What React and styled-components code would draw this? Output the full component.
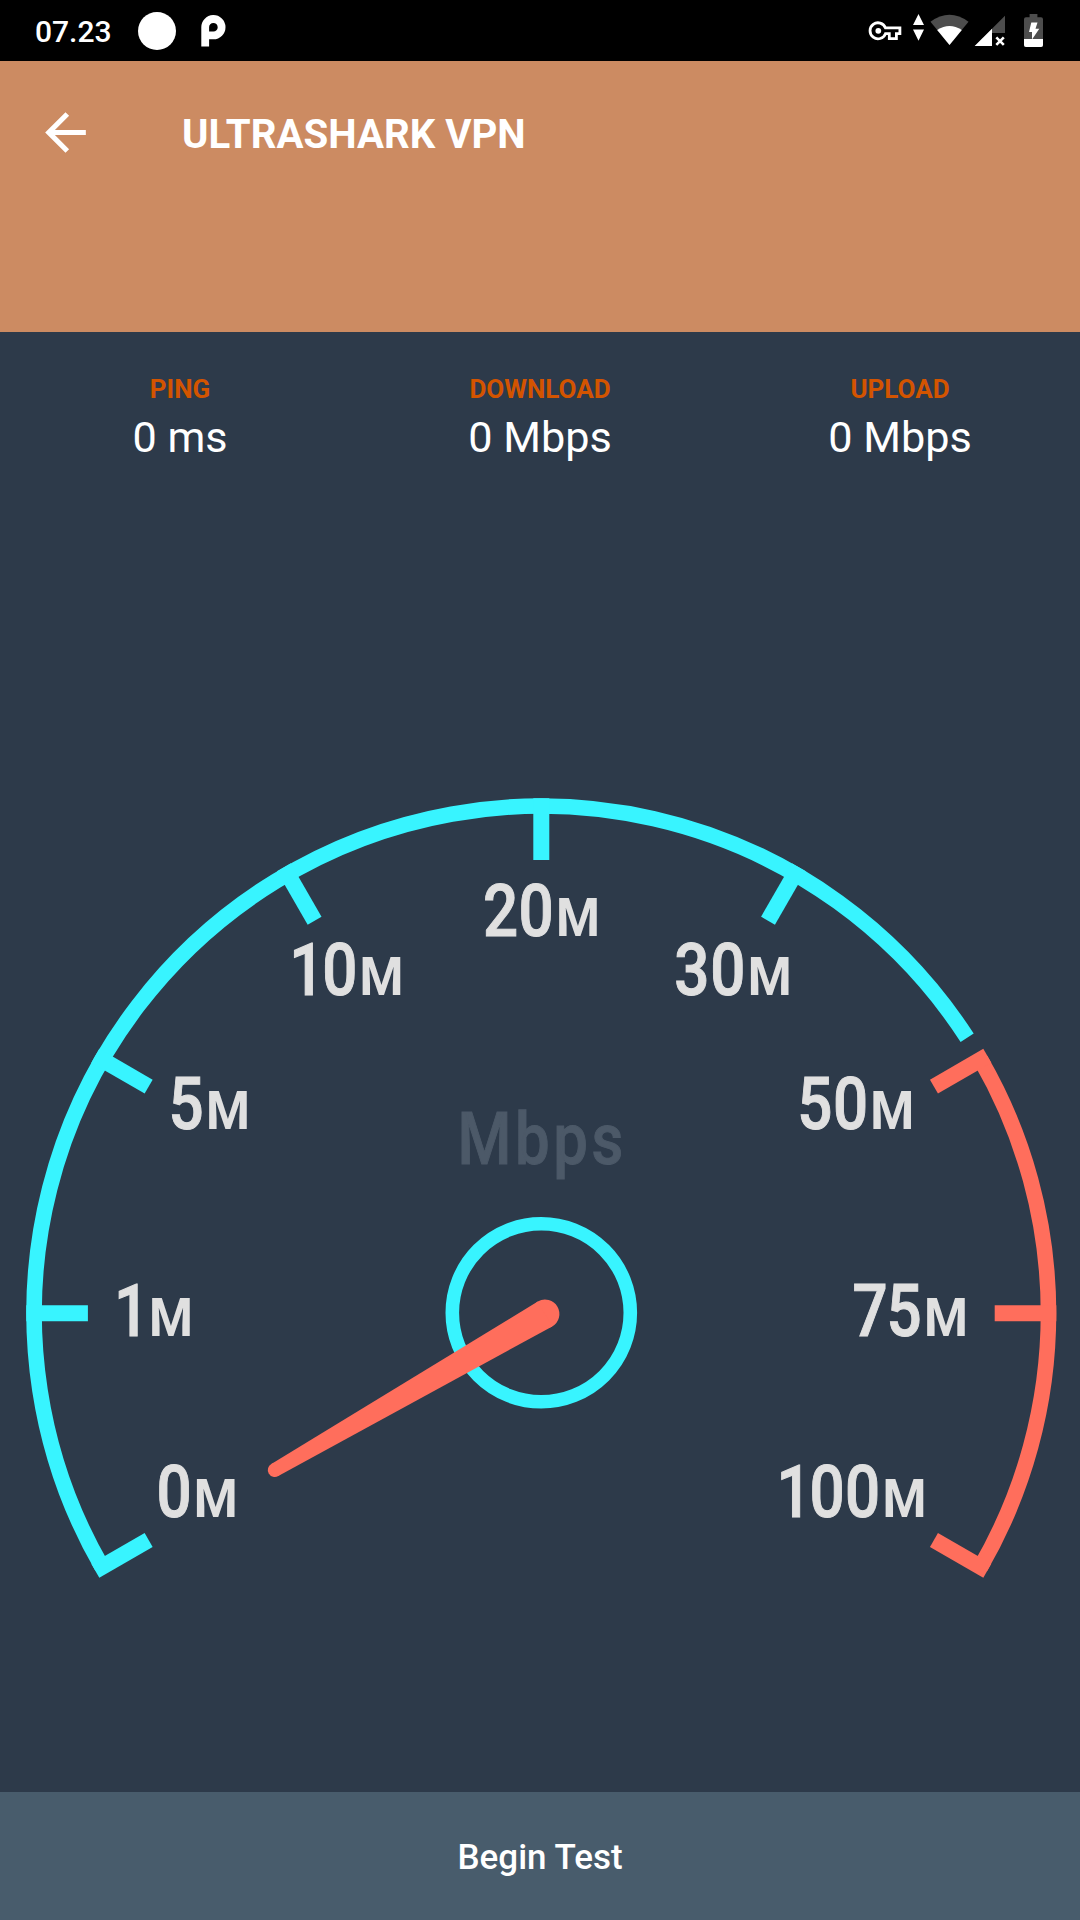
import styled, { createGlobalStyle } from 'styled-components';
import { MdArrowBack } from 'react-icons/md';

const CYAN = '#38f4ff';
const CORAL = '#ff6e5c';

// dial geometry, in the gauge's own coordinates
const CX = 541.3;
const CY = 521.3;
const OUTER = 515;
const RING = 507.2;
const TICK_END = 453.4;

// digits are narrowed and set on a fixed pitch
const NARROW = 0.86;
const PITCH = 35.6;
const NUDGE = { 1: 2.6, 3: -0.4, 7: 1.5 };

const stats = [
  { name: 'PING', value: '0 ms' },
  { name: 'DOWNLOAD', value: '0 Mbps' },
  { name: 'UPLOAD', value: '0 Mbps' },
];

// angle is measured clockwise from three o'clock, x is where the unit starts
const marks = [
  { digits: '0', angle: 150, x: 193.8, y: 724.9, color: CYAN },
  { digits: '1', angle: 180, x: 148.9, y: 543.5, color: CYAN },
  { digits: '5', angle: 210, x: 206, y: 337.2, color: CYAN },
  { digits: '10', angle: 240, x: 359.6, y: 202.9, color: CYAN },
  { digits: '20', angle: 270, x: 555.9, y: 143.5, color: CYAN },
  { digits: '30', angle: 300, x: 747.7, y: 202.9, color: CYAN },
  { digits: '50', angle: 330, x: 870.3, y: 337.2, color: CORAL },
  { digits: '75', angle: 0, x: 924, y: 543.5, color: CORAL },
  { digits: '100', angle: 30, x: 882.4, y: 724.9, color: CORAL },
];

const polar = (radius, angle) => {
  const rad = (angle * Math.PI) / 180;
  return [CX + radius * Math.cos(rad), CY + radius * Math.sin(rad)];
};

const arc = (radius, from, to) => {
  const [x1, y1] = polar(radius, from);
  const [x2, y2] = polar(radius, to);
  const large = to - from > 180 ? 1 : 0;
  return `M${x1} ${y1}A${radius} ${radius} 0 ${large} 1 ${x2} ${y2}`;
};

const digitOffsets = (digits) =>
  [...digits]
    .map((digit, i) => (-1.8 - (digits.length - i) * PITCH + (NUDGE[digit] || 0)) / NARROW)
    .join(' ');

const Tick = ({ angle, color }) => {
  const [x1, y1] = polar(TICK_END, angle);
  const [x2, y2] = polar(OUTER, angle);
  return <line x1={x1} y1={y1} x2={x2} y2={y2} stroke={color} strokeWidth="16" />;
};

const Mark = ({ digits, x, y }) => (
  <>
    <DialDigits x={digitOffsets(digits)} transform={`translate(${x} ${y}) scale(${NARROW} 1)`}>
      {digits}
    </DialDigits>
    <DialUnit transform={`translate(${x} ${y}) scale(0.93 1)`}>M</DialUnit>
  </>
);

const Gauge = () => (
  <Dial viewBox="0 0 1080 1000">
    <path d={arc(RING, 150, 327.1)} fill="none" stroke={CYAN} strokeWidth="15.6" />
    <path d={arc(RING, 330, 390)} fill="none" stroke={CORAL} strokeWidth="15.6" />
    {marks.map((mark) => (
      <Tick key={mark.digits} angle={mark.angle} color={mark.color} />
    ))}
    {marks.map((mark) => (
      <Mark key={mark.digits} {...mark} />
    ))}
    <DialCaption transform="translate(457.6 371.6) scale(0.85 1)">Mbps</DialCaption>
    <circle cx={CX} cy="520.8" r="89" fill="none" stroke={CYAN} strokeWidth="13.6" />
    {/* needle, tapering towards the tip */}
    <g transform="translate(545 522) rotate(150)" fill={CORAL}>
      <circle r="14.4" />
      <circle cx="312" r="7" />
      <path d="M0 -14.4L312 -7V7L0 14.4Z" />
    </g>
  </Dial>
);

const StatusIcons = () => (
  <StatusSvg width="180" height="61" viewBox="868 0 180 61">
    {/* vpn key */}
    <path
      d="M889 27.9H885.5A8 8 0 1 0 885.5 33.7H889.3V38.6H896.4V33.7H899.9V27.9Z"
      fill="none"
      stroke="#fff"
      strokeWidth="2.8"
      strokeLinejoin="miter"
    />
    <circle cx="878.3" cy="30.8" r="2.9" fill="#fff" />
    {/* data arrows */}
    <path d="M913 25L918.5 14L924 25ZM913 29.5H924L918.5 40.7Z" fill="#fff" />
    {/* wifi */}
    <path d="M930.5 21.7Q949.5 7.8 968.5 21.7L949.5 45Z" fill="#4d4d4d" />
    <path d="M937.2 30Q949.5 21.8 961.8 30L949.5 45Z" fill="#fff" />
    {/* mobile signal, no data */}
    <path d="M1005 15.7V33H992V46H974.7Z" fill="#4d4d4d" />
    <path d="M992 28.7V46H974.7Z" fill="#fff" />
    <path d="M996.3 37.3L1003.8 44.8M1003.8 37.3L996.3 44.8" stroke="#fff" strokeWidth="2.6" />
    {/* battery */}
    <path
      d="M1029.6 14H1037.4V17.3H1041Q1043 17.3 1043 19.3V45Q1043 47 1041 47H1026Q1024 47 1024 45V19.3Q1024 17.3 1026 17.3H1029.6Z"
      fill="#4d4d4d"
    />
    <path d="M1024 39H1043V45Q1043 47 1041 47H1026Q1024 47 1024 45Z" fill="#fff" />
    <path d="M1031.3 22.5H1037.5L1035.5 28.8H1039.3L1032 39.5V32H1029Z" fill="#fff" />
  </StatusSvg>
);

const App = () => (
  <>
    <GlobalStyle />
    <Screen>
      <StatusBar>
        <StatusGroup>
          <Clock>07.23</Clock>
          <Dot />
          <svg width="26" height="32" viewBox="0 0 26 32">
            <path
              d="M4.2 31.5V12.5A8.2 8.2 0 1 1 12.4 20.4H8"
              fill="none"
              stroke="#fff"
              strokeWidth="7.8"
            />
          </svg>
        </StatusGroup>
        <StatusIcons />
      </StatusBar>

      <AppBar>
        <BackButton aria-label="Back">
          <MdArrowBack size={61} />
        </BackButton>
        <Title>ULTRASHARK VPN</Title>
      </AppBar>

      <Body>
        <Stats>
          {stats.map((stat) => (
            <Stat key={stat.name}>
              <StatName>{stat.name}</StatName>
              <StatValue>{stat.value}</StatValue>
            </Stat>
          ))}
        </Stats>
        <Gauge />
      </Body>

      <StartButton>Begin Test</StartButton>
    </Screen>
  </>
);

const GlobalStyle = createGlobalStyle`
  * {
    box-sizing: border-box;
  }

  body {
    margin: 0;
    background: #2d3a4a;
    font-family: Roboto, sans-serif;
  }
`;

const Screen = styled.div`
  display: flex;
  flex-direction: column;
  width: 1080px;
  height: 1920px;
  overflow: hidden;
`;

const StatusBar = styled.div`
  display: flex;
  justify-content: space-between;
  align-items: center;
  height: 61px;
  padding: 0 32px 0 35px;
  background: #000;
`;

const StatusGroup = styled.div`
  display: flex;
  align-items: center;
`;

const Clock = styled.span`
  width: 103px;
  padding-top: 2px;
  color: #fff;
  font-size: 30px;
  font-weight: 500;
  line-height: 36px;
`;

const Dot = styled.span`
  width: 38px;
  height: 38px;
  margin-right: 25px;
  border-radius: 50%;
  background: #fff;
`;

const StatusSvg = styled.svg`
  display: block;
`;

const AppBar = styled.header`
  display: flex;
  align-items: flex-start;
  height: 271px;
  padding: 41px 35px 0;
  background: #cc8b62;
`;

const BackButton = styled.button`
  display: flex;
  padding: 0;
  border: none;
  background: none;
  color: #fff;
  cursor: pointer;
`;

const Title = styled.h1`
  margin: 0 0 0 86px;
  color: #fff;
  font-size: 40.2px;
  font-weight: 700;
  line-height: 65px;
`;

const Body = styled.main`
  display: flex;
  flex: 1;
  flex-direction: column;
  justify-content: space-between;
  background: #2d3a4a;
`;

const Stats = styled.div`
  display: grid;
  grid-template-columns: repeat(3, 1fr);
  padding-top: 41px;
`;

const Stat = styled.div`
  display: flex;
  flex-direction: column;
  align-items: center;
`;

const StatName = styled.span`
  color: #d35400;
  font-size: 26px;
  font-weight: 700;
  line-height: 32px;
`;

const StatValue = styled.span`
  color: #fff;
  font-size: 43.2px;
  line-height: 66px;
`;

const Dial = styled.svg`
  display: block;
  width: 1080px;
  height: 1000px;
`;

const DialDigits = styled.text`
  fill: #e0e0e0;
  stroke: #e0e0e0;
  stroke-width: 1px;
  font-size: 72px;
  font-weight: 500;
`;

const DialUnit = styled.text`
  fill: #e0e0e0;
  font-size: 54px;
  font-weight: 700;
`;

const DialCaption = styled.text`
  fill: #4c5968;
  stroke: #4c5968;
  stroke-width: 1px;
  font-size: 72.5px;
  font-weight: 500;
  letter-spacing: 4.2px;
`;

const StartButton = styled.button`
  height: 128px;
  padding: 2px 0 0;
  border: none;
  background: #485c6c;
  color: #fff;
  font-family: inherit;
  font-size: 35px;
  font-weight: 500;
  cursor: pointer;
`;

export default App;
